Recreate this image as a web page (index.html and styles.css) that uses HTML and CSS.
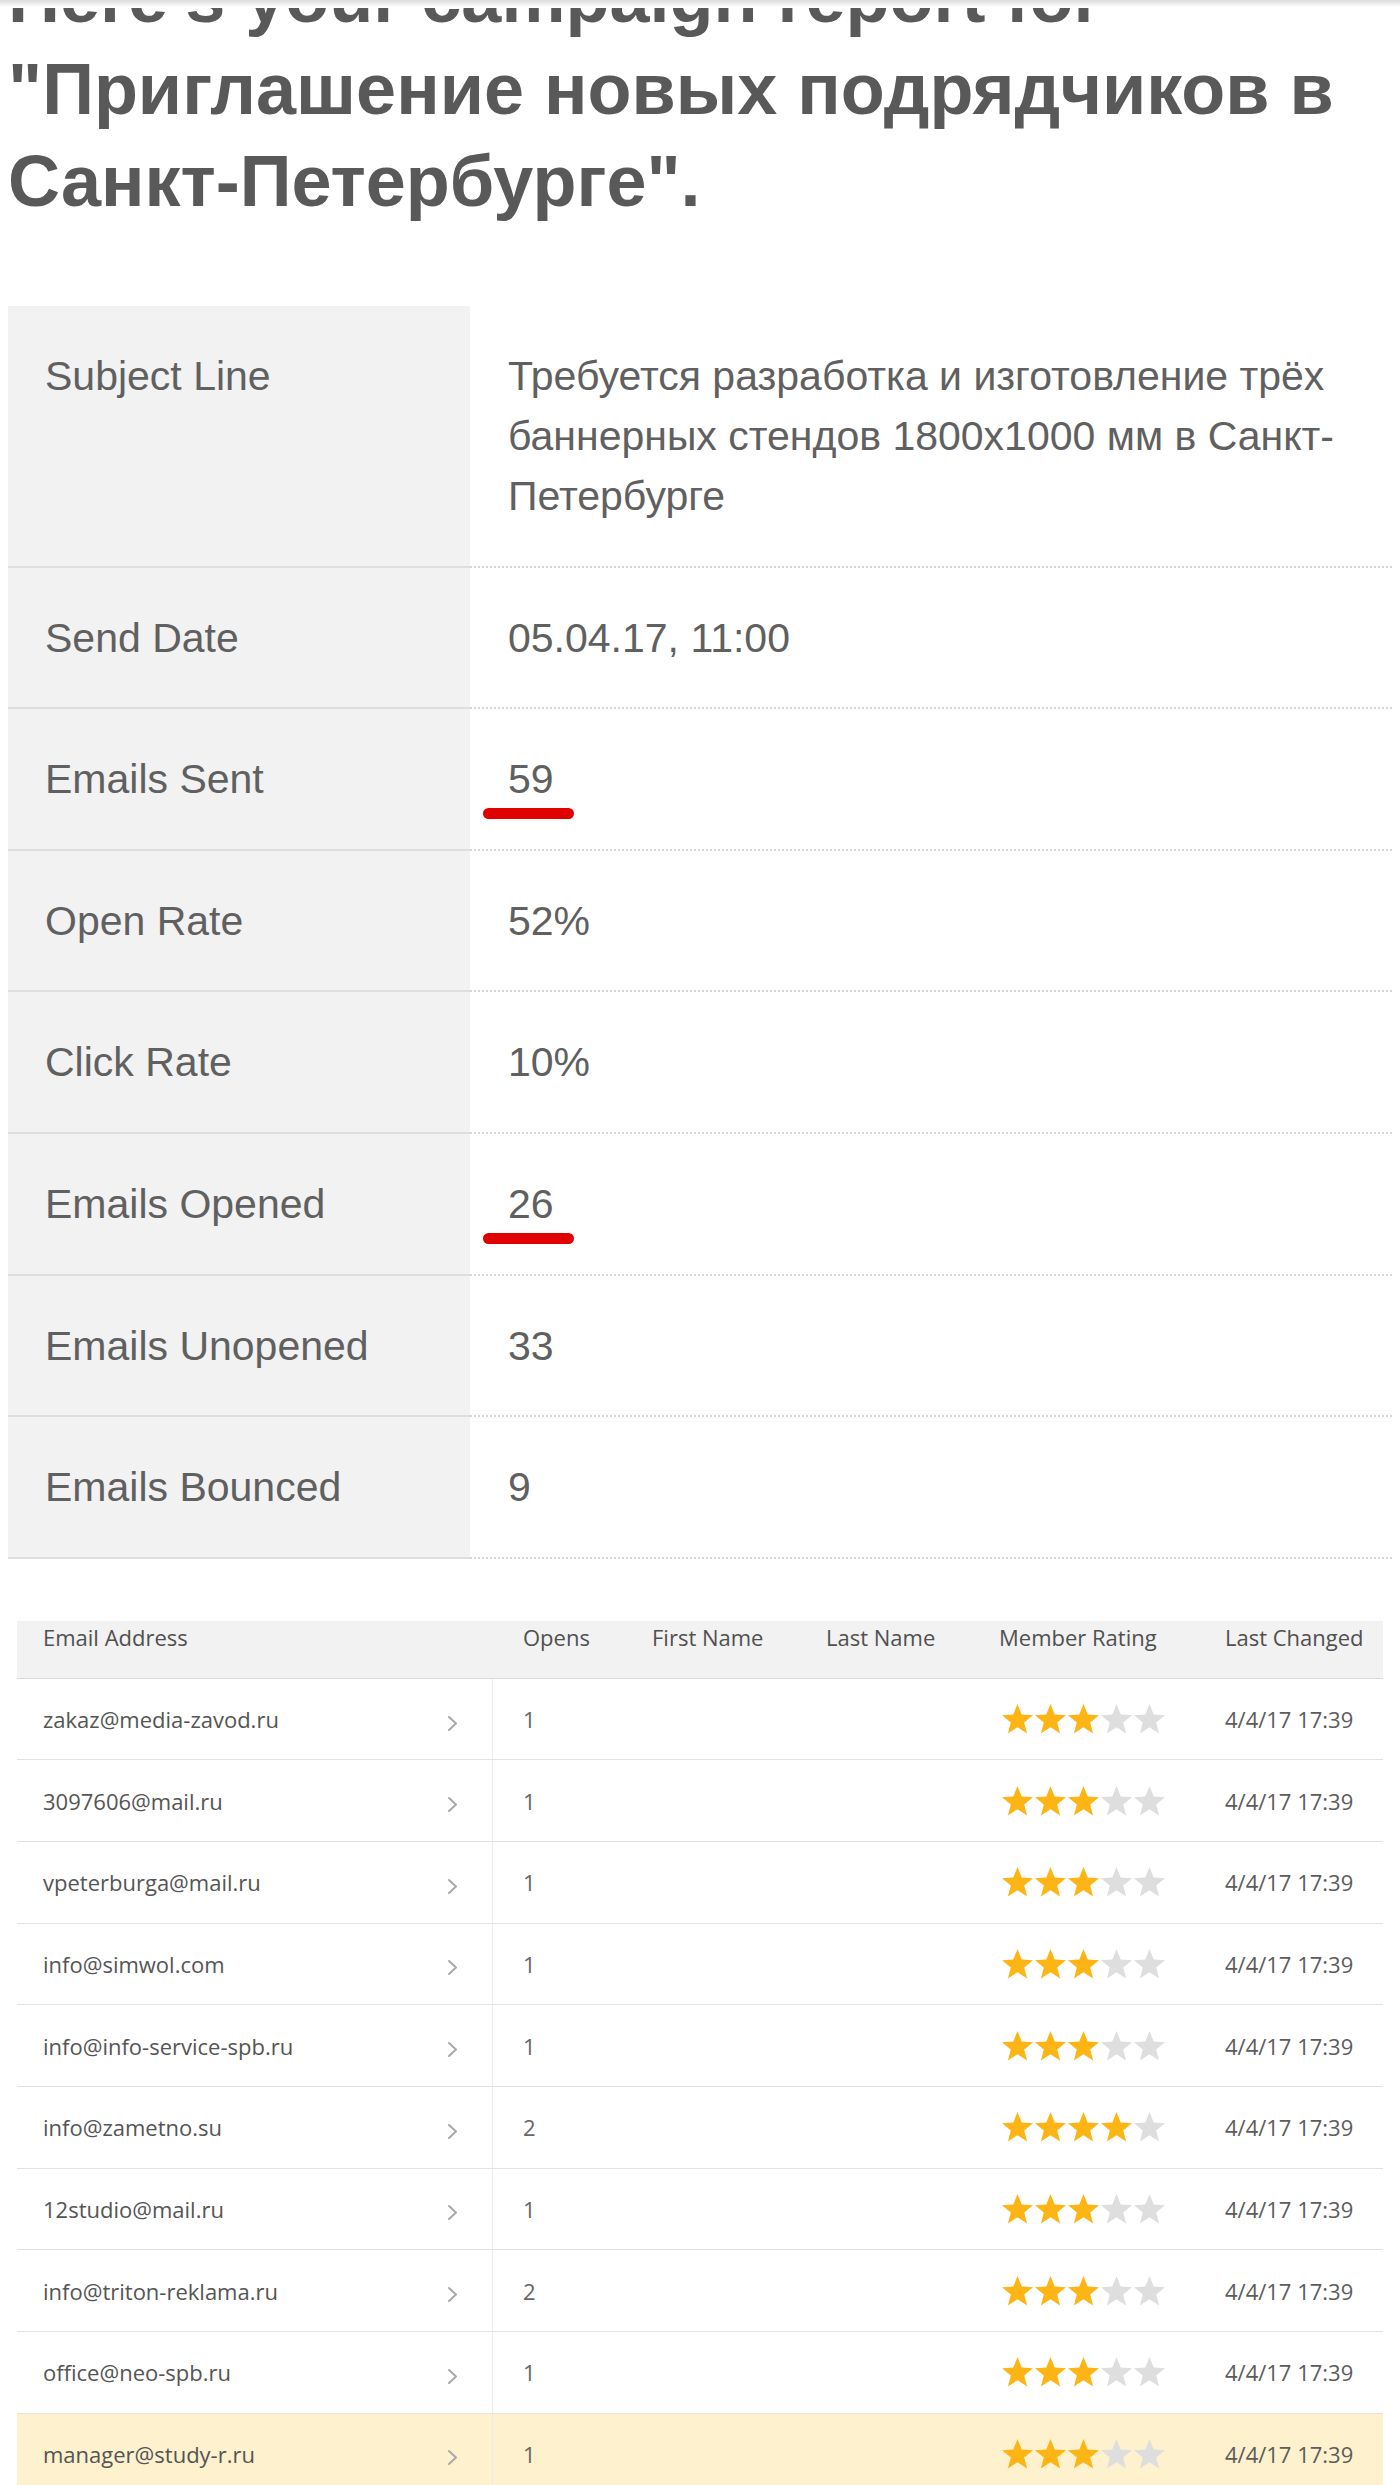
FILE: index.html
```html
<!DOCTYPE html>
<html lang="en">
<head>
<meta charset="utf-8">
<title>Campaign report</title>
<link rel="stylesheet" href="styles.css">
</head>
<body>
<h1 class="title">Here's your campaign report for "Приглашение новых подрядчиков в Санкт-Петербурге".</h1>

<div class="summary">
  <div class="srow"><div class="label">Subject Line</div><div class="value">Требуется разработка и изготовление трёх баннерных стендов 1800х1000 мм в Санкт-Петербурге</div></div>
  <div class="srow"><div class="label">Send Date</div><div class="value">05.04.17, 11:00</div></div>
  <div class="srow"><div class="label">Emails Sent</div><div class="value marked">59</div></div>
  <div class="srow"><div class="label">Open Rate</div><div class="value">52%</div></div>
  <div class="srow"><div class="label">Click Rate</div><div class="value">10%</div></div>
  <div class="srow"><div class="label">Emails Opened</div><div class="value marked">26</div></div>
  <div class="srow"><div class="label">Emails Unopened</div><div class="value">33</div></div>
  <div class="srow"><div class="label">Emails Bounced</div><div class="value">9</div></div>
</div>

<svg width="0" height="0" class="defs" aria-hidden="true">
  <defs>
    <polygon id="star" points="16,1 20.2,11.6 31.5,12.2 22.7,19.4 25.6,30.5 16,24.3 6.4,30.5 9.3,19.4 0.5,12.2 11.8,11.6"/>
    <polyline id="chev" points="2,2 9,8.5 2,15" fill="none" stroke-width="2" stroke-linecap="round" stroke-linejoin="round"/>
  </defs>
</svg>

<div class="members">
  <div class="mrow head">
    <div class="c-email">Email Address</div>
    <div class="c-opens">Opens</div>
    <div>First Name</div>
    <div>Last Name</div>
    <div>Member Rating</div>
    <div>Last Changed</div>
  </div>

  <div class="mrow">
    <div class="c-email"><span>zakaz@media-zavod.ru</span><svg class="chev" viewBox="0 0 12 17"><use href="#chev"/></svg></div>
    <div class="c-opens">1</div><div></div><div></div>
    <div class="stars"><svg viewBox="0 0 32 32" class="on"><use href="#star"/></svg><svg viewBox="0 0 32 32" class="on"><use href="#star"/></svg><svg viewBox="0 0 32 32" class="on"><use href="#star"/></svg><svg viewBox="0 0 32 32" class="off"><use href="#star"/></svg><svg viewBox="0 0 32 32" class="off"><use href="#star"/></svg></div>
    <div class="c-date">4/4/17 17:39</div>
  </div>

  <div class="mrow">
    <div class="c-email"><span>3097606@mail.ru</span><svg class="chev" viewBox="0 0 12 17"><use href="#chev"/></svg></div>
    <div class="c-opens">1</div><div></div><div></div>
    <div class="stars"><svg viewBox="0 0 32 32" class="on"><use href="#star"/></svg><svg viewBox="0 0 32 32" class="on"><use href="#star"/></svg><svg viewBox="0 0 32 32" class="on"><use href="#star"/></svg><svg viewBox="0 0 32 32" class="off"><use href="#star"/></svg><svg viewBox="0 0 32 32" class="off"><use href="#star"/></svg></div>
    <div class="c-date">4/4/17 17:39</div>
  </div>

  <div class="mrow">
    <div class="c-email"><span>vpeterburga@mail.ru</span><svg class="chev" viewBox="0 0 12 17"><use href="#chev"/></svg></div>
    <div class="c-opens">1</div><div></div><div></div>
    <div class="stars"><svg viewBox="0 0 32 32" class="on"><use href="#star"/></svg><svg viewBox="0 0 32 32" class="on"><use href="#star"/></svg><svg viewBox="0 0 32 32" class="on"><use href="#star"/></svg><svg viewBox="0 0 32 32" class="off"><use href="#star"/></svg><svg viewBox="0 0 32 32" class="off"><use href="#star"/></svg></div>
    <div class="c-date">4/4/17 17:39</div>
  </div>

  <div class="mrow">
    <div class="c-email"><span>info@simwol.com</span><svg class="chev" viewBox="0 0 12 17"><use href="#chev"/></svg></div>
    <div class="c-opens">1</div><div></div><div></div>
    <div class="stars"><svg viewBox="0 0 32 32" class="on"><use href="#star"/></svg><svg viewBox="0 0 32 32" class="on"><use href="#star"/></svg><svg viewBox="0 0 32 32" class="on"><use href="#star"/></svg><svg viewBox="0 0 32 32" class="off"><use href="#star"/></svg><svg viewBox="0 0 32 32" class="off"><use href="#star"/></svg></div>
    <div class="c-date">4/4/17 17:39</div>
  </div>

  <div class="mrow">
    <div class="c-email"><span>info@info-service-spb.ru</span><svg class="chev" viewBox="0 0 12 17"><use href="#chev"/></svg></div>
    <div class="c-opens">1</div><div></div><div></div>
    <div class="stars"><svg viewBox="0 0 32 32" class="on"><use href="#star"/></svg><svg viewBox="0 0 32 32" class="on"><use href="#star"/></svg><svg viewBox="0 0 32 32" class="on"><use href="#star"/></svg><svg viewBox="0 0 32 32" class="off"><use href="#star"/></svg><svg viewBox="0 0 32 32" class="off"><use href="#star"/></svg></div>
    <div class="c-date">4/4/17 17:39</div>
  </div>

  <div class="mrow">
    <div class="c-email"><span>info@zametno.su</span><svg class="chev" viewBox="0 0 12 17"><use href="#chev"/></svg></div>
    <div class="c-opens">2</div><div></div><div></div>
    <div class="stars"><svg viewBox="0 0 32 32" class="on"><use href="#star"/></svg><svg viewBox="0 0 32 32" class="on"><use href="#star"/></svg><svg viewBox="0 0 32 32" class="on"><use href="#star"/></svg><svg viewBox="0 0 32 32" class="on"><use href="#star"/></svg><svg viewBox="0 0 32 32" class="off"><use href="#star"/></svg></div>
    <div class="c-date">4/4/17 17:39</div>
  </div>

  <div class="mrow">
    <div class="c-email"><span>12studio@mail.ru</span><svg class="chev" viewBox="0 0 12 17"><use href="#chev"/></svg></div>
    <div class="c-opens">1</div><div></div><div></div>
    <div class="stars"><svg viewBox="0 0 32 32" class="on"><use href="#star"/></svg><svg viewBox="0 0 32 32" class="on"><use href="#star"/></svg><svg viewBox="0 0 32 32" class="on"><use href="#star"/></svg><svg viewBox="0 0 32 32" class="off"><use href="#star"/></svg><svg viewBox="0 0 32 32" class="off"><use href="#star"/></svg></div>
    <div class="c-date">4/4/17 17:39</div>
  </div>

  <div class="mrow">
    <div class="c-email"><span>info@triton-reklama.ru</span><svg class="chev" viewBox="0 0 12 17"><use href="#chev"/></svg></div>
    <div class="c-opens">2</div><div></div><div></div>
    <div class="stars"><svg viewBox="0 0 32 32" class="on"><use href="#star"/></svg><svg viewBox="0 0 32 32" class="on"><use href="#star"/></svg><svg viewBox="0 0 32 32" class="on"><use href="#star"/></svg><svg viewBox="0 0 32 32" class="off"><use href="#star"/></svg><svg viewBox="0 0 32 32" class="off"><use href="#star"/></svg></div>
    <div class="c-date">4/4/17 17:39</div>
  </div>

  <div class="mrow">
    <div class="c-email"><span>office@neo-spb.ru</span><svg class="chev" viewBox="0 0 12 17"><use href="#chev"/></svg></div>
    <div class="c-opens">1</div><div></div><div></div>
    <div class="stars"><svg viewBox="0 0 32 32" class="on"><use href="#star"/></svg><svg viewBox="0 0 32 32" class="on"><use href="#star"/></svg><svg viewBox="0 0 32 32" class="on"><use href="#star"/></svg><svg viewBox="0 0 32 32" class="off"><use href="#star"/></svg><svg viewBox="0 0 32 32" class="off"><use href="#star"/></svg></div>
    <div class="c-date">4/4/17 17:39</div>
  </div>

  <div class="mrow hl">
    <div class="c-email"><span>manager@study-r.ru</span><svg class="chev" viewBox="0 0 12 17"><use href="#chev"/></svg></div>
    <div class="c-opens">1</div><div></div><div></div>
    <div class="stars"><svg viewBox="0 0 32 32" class="on"><use href="#star"/></svg><svg viewBox="0 0 32 32" class="on"><use href="#star"/></svg><svg viewBox="0 0 32 32" class="on"><use href="#star"/></svg><svg viewBox="0 0 32 32" class="off"><use href="#star"/></svg><svg viewBox="0 0 32 32" class="off"><use href="#star"/></svg></div>
    <div class="c-date">4/4/17 17:39</div>
  </div>
</div>
</body>
</html>
```

FILE: styles.css
```css
html {
  scrollbar-width: none;
}
body {
  margin: 8px;
  background: #ffffff;
  font-family: "Liberation Sans", Arial, sans-serif;
  color: #606060;
}
body::before {
  content: "";
  position: fixed;
  left: 0;
  right: 0;
  top: 0;
  height: 7px;
  background: linear-gradient(to bottom, rgba(0,0,0,0.14), rgba(0,0,0,0));
  z-index: 5;
}
.defs {
  position: absolute;
  width: 0;
  height: 0;
}

.title {
  margin: -57px 0 79px 0;
  font-family: "Liberation Sans", Arial, sans-serif;
  font-weight: 700;
  font-size: 72px;
  line-height: 92px;
  color: #595959;
}

.summary {
  width: 1392px;
  font-size: 41px;
  line-height: 60px;
  color: #606060;
}
.srow {
  display: grid;
  grid-template-columns: 462px 1fr;
}
.label {
  background: #f2f2f2;
  padding: 40px 20px 39.6px 37px;
  border-bottom: 2px solid #dedede;
}
.value {
  padding: 40px 40px 39.6px 38px;
  border-bottom: 2px dotted #d6d6d6;
}
.marked {
  position: relative;
}
.marked::after {
  content: "";
  position: absolute;
  left: 13px;
  top: 99px;
  width: 91px;
  height: 11px;
  border-radius: 6px;
  background: #e00000;
}

.members {
  margin: 62px 0 0 9px;
  width: 1366px;
  font-family: "Open Sans", "Liberation Sans", sans-serif;
  font-size: 22px;
  line-height: 30px;
  color: #555555;
}
.mrow {
  display: grid;
  grid-template-columns: 476px 159px 174px 173px 226px 158px;
  align-items: center;
  height: 81.65px;
  box-sizing: border-box;
  border-bottom: 1px solid #e2e2e2;
}
.mrow.head {
  height: 58px;
  align-items: start;
  padding-top: 1px;
  background: #f2f2f2;
  border-bottom: 1px solid #dadada;
  color: #505050;
}
.mrow.hl {
  background: #fef1cd;
}
.c-email {
  padding-left: 26px;
  padding-right: 33px;
}
.mrow:not(.head) .c-email {
  align-self: stretch;
  display: flex;
  align-items: center;
  justify-content: space-between;
  border-right: 1px solid #ececec;
}
.c-opens {
  padding-left: 30px;
}
.mrow:not(.head) .c-opens {
  color: #666666;
}
.chev {
  width: 12px;
  height: 17px;
  margin-top: 8px;
  stroke: #a8a8a8;
}
.stars {
  display: flex;
  padding-left: 2px;
  height: 32px;
}
.stars svg {
  width: 33px;
  height: 32px;
}
.stars .on {
  fill: #fdb515;
}
.stars .off {
  fill: #dedede;
}
.c-date {
  color: #5c5c5c;
}
```
